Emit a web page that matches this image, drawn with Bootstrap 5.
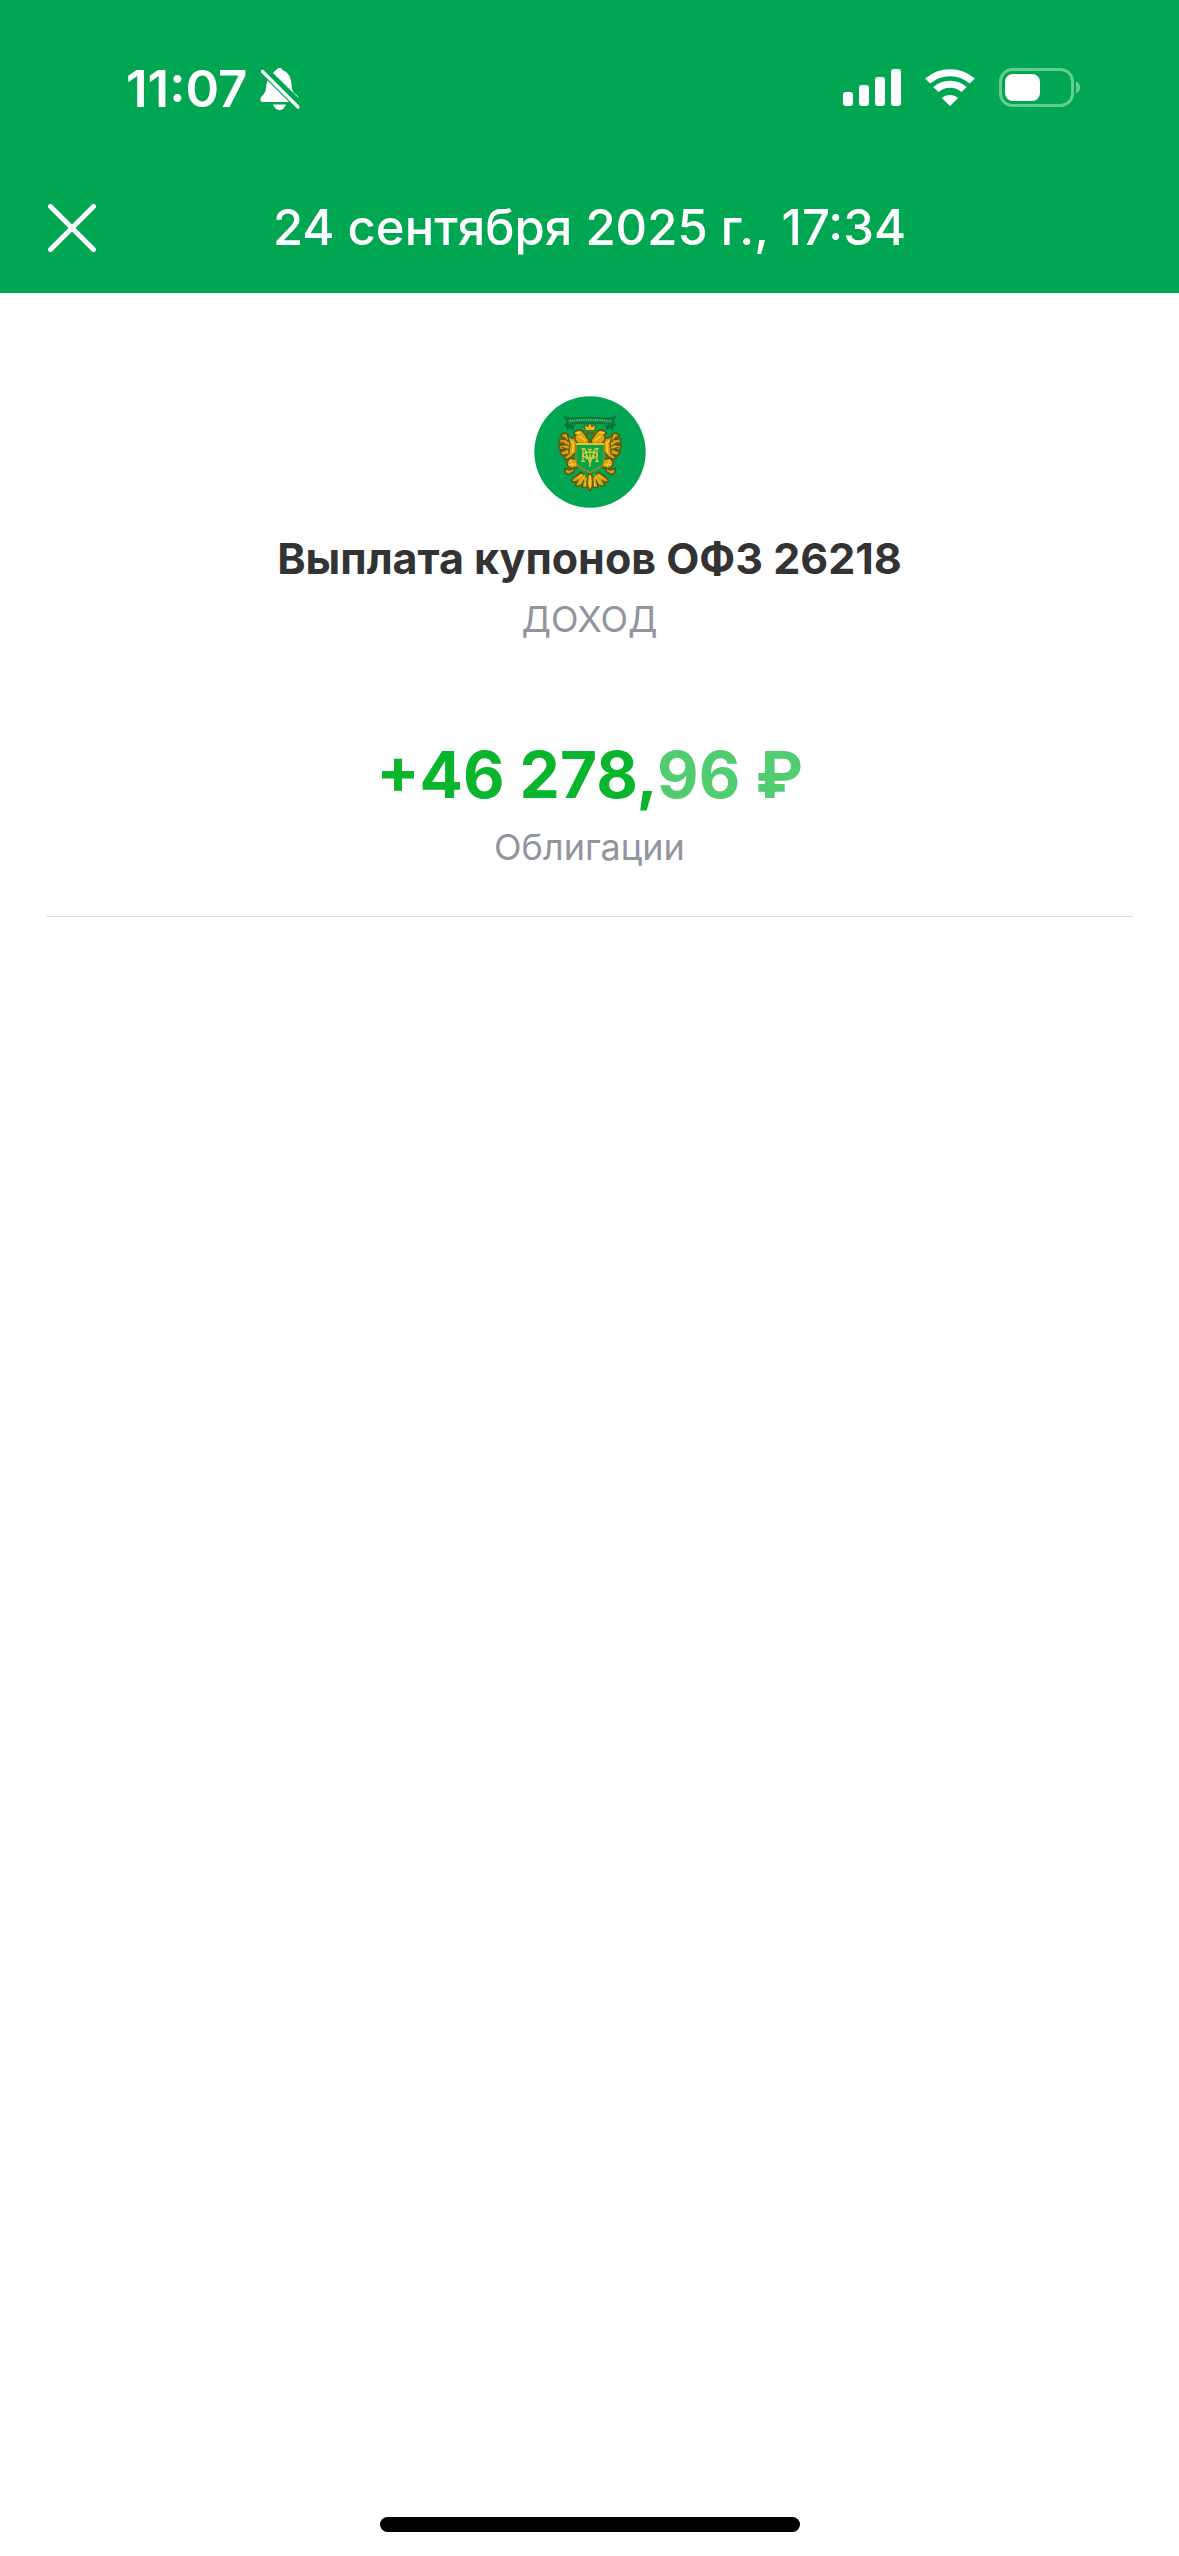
<!DOCTYPE html>
<html lang="ru">
<head>
<meta charset="utf-8">
<meta name="viewport" content="width=device-width, initial-scale=1">
<title>Выплата купонов ОФЗ 26218</title>
<link href="https://cdn.jsdelivr.net/npm/bootstrap@5.3.0/dist/css/bootstrap.min.css" rel="stylesheet">
<style>
  body { font-family: Inter, "Liberation Sans", sans-serif; background: #fff; color: #333; }
  .top-area { background: #00a651; color: #fff; }
  .status-row { height: 174px; padding: 0 98px 0 126px; }
  .clock { font-size: 51px; line-height: 60px; font-weight: 600; }
  .title-row { display: grid; grid-template-columns: 144px 1fr 144px; height: 119px; padding-bottom: 12px; }
  .title-row h1 { font-size: 49px; line-height: 60px; font-weight: 500; }
  .close-btn { width: 144px; height: 106px; color: #fff; }
  .details { padding: 103px 46px 0; }
  .op-name { font-size: 43px; line-height: 52px; font-weight: 700; margin-top: 24px; }
  .op-kind { font-size: 36px; line-height: 46px; margin-top: 12px; color: #92959d; }
  .amount { font-size: 64px; line-height: 78px; font-weight: 700; color: #08b52d; margin-top: 94px; }
  .cents { color: #52cc70; }
  .op-group { font-size: 36px; line-height: 44px; margin-top: 11px; color: #92959d; }
  .divider { height: 1px; background: #dcdcde; margin-top: 47px; }
  .home-bar { width: 420px; height: 15px; background: #000; margin-bottom: 24px; }
</style>
</head>
<body>
<div class="min-vh-100 d-flex flex-column">
  <header class="top-area">
    <div class="status-row d-flex align-items-center justify-content-between">
      <div class="d-flex align-items-center gap-2 pt-1">
        <span class="clock">11:07</span>
        <svg class="ms-1" width="42" height="44" viewBox="0 0 42 44" fill="#fff" aria-hidden="true">
          <path d="M14 6C15.300 4 16 3.500 17.500 3C18 1.500 19 1 20.500 1S23 1.500 23.500 3C29 5 32 10 32.500 17C32.800 21 33 23 35 26C37 28 39.500 29 39.500 31Z"/>
          <path d="M8.500 13.500L30 35H4C2 35 1 33.500 1.500 32C2 29 5 28 6.500 24C7.500 21 7 17 8.500 13.500Z"/>
          <path d="M14 37.500h13c-1 3.500-3.500 5.500-6.500 5.500S15 41 14 37.500Z"/>
          <path d="M3.500 4.500L39 40" fill="none" stroke="#fff" stroke-width="3.200" stroke-linecap="round"/>
        </svg>
      </div>
      <div class="d-flex align-items-center">
        <svg width="58" height="40" viewBox="0 0 58 40" fill="#fff" aria-hidden="true">
          <rect y="25" width="10" height="14" rx="3"/><rect x="16" y="18" width="10" height="21" rx="3"/>
          <rect x="32" y="10" width="10" height="29" rx="3"/><rect x="48" y="2" width="10" height="37" rx="3"/>
        </svg>
        <svg class="ms-4 me-4" width="50" height="40" viewBox="2 0 46 40" preserveAspectRatio="none" fill="none" stroke="#fff" stroke-width="7" aria-hidden="true">
          <path d="M4.500 14C16.500 3 33.500 3 45.500 14"/>
          <path d="M12 22.500C19.500 15.500 30.500 15.500 38 22.500"/>
          <path d="M25 39L17.500 31C21.500 27 28.500 27 32.500 31Z" fill="#fff" stroke="none"/>
        </svg>
        <svg width="82" height="40" viewBox="0 0 82 40" aria-hidden="true">
          <rect x="1.500" y="2.500" width="72" height="36" rx="12" fill="none" stroke="#66cc96" stroke-width="3"/>
          <path d="M77 14.500C82.500 16.500 82.500 24.500 77 26.500Z" fill="#66cc96"/>
          <rect x="6" y="7" width="35" height="27" rx="8" fill="#fff"/>
        </svg>
      </div>
    </div>
    <div class="title-row align-items-center">
      <button type="button" class="close-btn btn border-0 p-0" aria-label="Закрыть">
        <svg width="48" height="48" viewBox="0 0 48 48" fill="none" stroke="currentColor" stroke-width="5" stroke-linecap="round"><path d="M2.500 2.500l43 43M45.500 2.500l-43 43"/></svg>
      </button>
      <h1 class="m-0 text-center text-nowrap">24 сентября 2025 г., 17:34</h1>
    </div>
  </header>

  <main class="details text-center flex-grow-1">
    <svg class="d-block mx-auto" width="112" height="112" viewBox="42 34 336 336" role="img" aria-label="Эмблема">
      <circle cx="210" cy="202" r="167" fill="#00a651"/>
      <g stroke="#5f5a12" stroke-width="5" stroke-linejoin="round" fill="#d9a414">
        <!-- wings -->
        <g id="wing">
          <path d="M172 156C158 164 148 160 142 148C136 144 128 146 122 152L134 164L118 162L119 176L134 180L116 182L120 195L136 196L120 202L126 213L142 210L131 219L140 225L156 216L168 202Z"/>
          <path d="M142 152L150 176L146 210M130 156L146 172M124 172L146 184M124 188L148 196" fill="none" stroke="#6b5a0e" stroke-width="4"/>
          <path d="M152 168L160 176L158 204" fill="none" stroke="#ffd52c" stroke-width="4"/>
          <path d="M174 176C164 168 160 158 168 150L160 146C166 136 180 132 188 140C196 148 198 158 208 164L204 178Z"/>
          <path d="M166 146L182 143M178 154L196 168" fill="none" stroke="#ffd52c" stroke-width="4"/>
          <path d="M150 220L170 224L174 246L160 254L144 246L140 232Z"/>
          <path d="M134 252L150 256L164 248L160 262L146 270L136 264Z"/>
          <path d="M150 226L160 246M146 240L168 238" fill="none" stroke="#ffd52c" stroke-width="3"/>
          <path d="M184 262L160 280L154 288C160 296 168 292 174 284L166 302C176 310 184 300 190 286L186 306C194 314 204 306 206 284Z"/>
          <path d="M188 268L168 288M196 270L180 300M202 274L196 306" fill="none" stroke="#ffd52c" stroke-width="3"/>
        </g>
        <use href="#wing" transform="matrix(-1 0 0 1 420 0)"/>
        <path d="M210 262C198 280 198 306 210 318C222 306 222 280 210 262Z"/>
        <path d="M210 272V308" stroke="#ffd52c" stroke-width="4"/>
        <!-- shield and crown -->
        <path d="M168 178H252V226C252 248 232 250 210 264C188 250 168 248 168 226Z" fill="#08a34c" stroke="#a98912" stroke-width="4"/>
        <path d="M168 178H252" stroke="#ffce24" stroke-width="5"/>
        <path d="M199 145H222L218 161L210 166L202 161Z" fill="#079547" stroke="#705b0c"/>
        <path d="M196 138L193 120L204 126L210 113L216 126L227 120L224 138Z" fill="#f5b81c" stroke-width="3"/>
      </g>
      <!-- monogram -->
      <g fill="none" stroke="#d5cb3e" stroke-width="4">
        <path d="M184 192H194L210 236L226 192H236M189 194V230M231 194V230M183 230H195M225 230H237M203 194H217M210 194V246M199 200V224M221 200V224"/>
        <ellipse cx="210" cy="211" rx="22" ry="9"/>
      </g>
      <!-- ribbon -->
      <path d="M132 96C154 107 179 97 210 98S266 107 288 96L278 110L286 122C258 113 238 117 210 116S160 114 136 122L143 110Z" fill="#0b8a45" stroke="#08713a" stroke-width="4"/>
      <path d="M137 122L164 120L160 137L150 130L142 138ZM283 122L256 120L260 137L270 130L278 138Z" fill="#06733c"/>
      <path d="M148 109C174 106 184 106 210 106S252 107 275 110" fill="none" stroke="#6fbd76" stroke-width="5" stroke-dasharray="4 3"/>
    </svg>
    <h2 class="op-name mb-0">Выплата купонов ОФЗ 26218</h2>
    <p class="op-kind mb-0">ДОХОД</p>
    <p class="amount mb-0">+46 278,<span class="cents">96 ₽</span></p>
    <p class="op-group mb-0">Облигации</p>
    <div class="divider"></div>
  </main>

  <div class="home-bar rounded-pill mx-auto"></div>
</div>
<script src="https://cdn.jsdelivr.net/npm/bootstrap@5.3.0/dist/js/bootstrap.bundle.min.js"></script>
</body>
</html>
